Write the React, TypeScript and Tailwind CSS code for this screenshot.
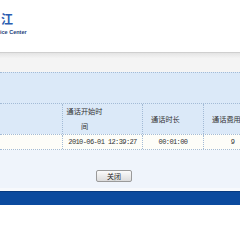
import React from "react";

const cjk = { fontFamily: '"Noto Sans CJK SC", "Noto Sans", sans-serif' };
const mono = { fontFamily: '"Liberation Mono", monospace' };

export default function App() {
  return (
    <div className="w-[240px] h-[240px] overflow-hidden bg-white flex flex-col">
      {/* logo header */}
      <div className="h-[52px] bg-white flex flex-col pl-[1px] pt-[12px]">
        <div className="text-[12px] leading-[14px] font-bold text-[#2a5cb0]" style={cjk}>
          江
        </div>
        <div
          className="mt-[3px] -ml-[1px] text-[5.5px] leading-[6px] font-bold text-[#1b3d7a]"
          style={{ fontFamily: '"Liberation Sans", Arial, sans-serif' }}
        >
          ice Center
        </div>
      </div>
      <div className="h-[1px] bg-[#cfcfcf]" />
      <div className="h-[5px] bg-gradient-to-b from-[#e4e4e4] to-[#f3f3f3]" />
      <div className="h-[14px] bg-[#f4f4f4]" />
      {/* light blue band */}
      <div className="h-[31px] bg-[#dbe9f8] border-t border-dotted border-[#a3bbd6]" />
      {/* header row */}
      <div
        className="h-[31px] bg-[#dbe9f8] border-t border-dotted border-[#a3bbd6] flex text-[7.2px] text-[#333]"
        style={cjk}
      >
        <div className="w-[62px] shrink-0" />
        <div className="w-[80px] shrink-0 border-l border-dotted border-[#a3bbd6] pl-[3px] flex items-center">
          <div className="w-[37px] text-center leading-[15px]">通话开始时间</div>
        </div>
        <div className="w-[61px] shrink-0 border-l border-dotted border-[#a3bbd6] pl-[8px] flex items-center">
          <span className="leading-[15px]">通话时长</span>
        </div>
        <div className="w-[58px] shrink-0 border-l border-dotted border-[#a3bbd6] pl-[8px] flex items-center whitespace-nowrap">
          <span className="leading-[15px]">通话费用</span>
        </div>
      </div>
      {/* data row */}
      <div
        className="h-[16px] bg-[#fdfdf8] border-t border-b border-dotted border-[#a3bbd6] flex text-[7px] text-[#333] tracking-[-0.6px] whitespace-nowrap"
        style={mono}
      >
        <div className="w-[62px] shrink-0" />
        <div className="w-[80px] shrink-0 border-l border-dotted border-[#a3bbd6] flex items-center justify-center">
          2010-06-01 12:39:27
        </div>
        <div className="w-[61px] shrink-0 border-l border-dotted border-[#a3bbd6] flex items-center justify-center">
          00:01:00
        </div>
        <div className="w-[58px] shrink-0 border-l border-dotted border-[#a3bbd6] flex items-center justify-center">
          9
        </div>
      </div>
      {/* button area */}
      <div className="h-[38px] bg-[#eff4fb] pt-[20px] pl-[96px]">
        <button
          className="w-[36px] h-[12px] rounded-[2px] border border-[#9a9a9a] bg-gradient-to-b from-[#fbfbfb] to-[#dcdcdc] text-[7px] leading-[10px] text-[#222] flex items-center justify-center"
          style={cjk}
        >
          关闭
        </button>
      </div>
      <div className="h-[3px] bg-[#f7f9fc]" />
      <div className="h-[14px] bg-[#0b4a9e] border-t border-[#073a80]" />
      <div className="flex-1 bg-white" />
    </div>
  );
}
